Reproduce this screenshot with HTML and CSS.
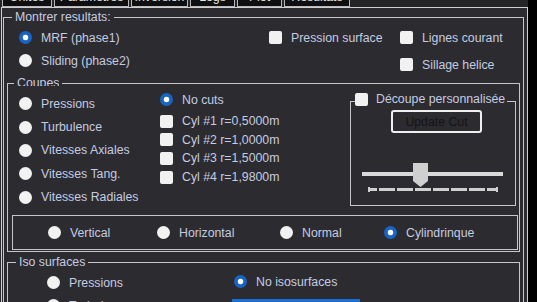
FILE: index.html
```html
<!DOCTYPE html>
<html lang="fr">
<head>
    <meta charset="UTF-8">
    <title>Résultats</title>
    <link rel="stylesheet" href="styles.css">
</head>
<body>
<div class="window">
    <div class="tabs">
        <div class="tab t1">Unités</div>
        <div class="tab t2">Paramètres</div>
        <div class="tab t3">Inversion</div>
        <div class="tab t4">Logs</div>
        <div class="tab t5">Plot</div>
        <div class="tab t6">Résultats</div>
    </div>

    <div class="page">
        <fieldset class="group show">
            <legend>Montrer resultats:</legend>
            <div class="top">
                <div class="col">
                    <label class="opt"><span class="radio on"></span>MRF (phase1)</label>
                    <label class="opt"><span class="radio"></span>Sliding (phase2)</label>
                </div>
                <div class="col">
                    <label class="opt"><span class="check"></span>Pression surface</label>
                </div>
                <div class="col checks-b">
                    <label class="opt"><span class="check"></span>Lignes courant</label>
                    <label class="opt"><span class="check"></span>Sillage helice</label>
                </div>
            </div>

            <!-- coupes -->
            <fieldset class="group coupes">
                <legend><span class="clip">Coupes</span></legend>
                <div class="coupes-row">
                    <div class="col vars">
                        <label class="opt"><span class="radio"></span>Pressions</label>
                        <label class="opt"><span class="radio"></span>Turbulence</label>
                        <label class="opt"><span class="radio"></span>Vitesses Axiales</label>
                        <label class="opt"><span class="radio"></span>Vitesses Tang.</label>
                        <label class="opt"><span class="radio"></span>Vitesses Radiales</label>
                    </div>
                    <div class="col cuts">
                        <label class="opt nocut"><span class="radio on"></span>No cuts</label>
                        <label class="opt cyl"><span class="check"></span>Cyl #1 r=0,5000m</label>
                        <label class="opt cyl"><span class="check"></span>Cyl #2 r=1,0000m</label>
                        <label class="opt cyl"><span class="check"></span>Cyl #3 r=1,5000m</label>
                        <label class="opt cyl"><span class="check"></span>Cyl #4 r=1,9800m</label>
                    </div>
                    <fieldset class="group custom">
                        <legend><span class="check"></span>Découpe personnalisée</legend>
                        <button class="update">Update Cut</button>
                        <svg class="slider" width="164" height="67" viewBox="0 0 164 67">
                            <rect x="11" y="39" width="141" height="4" fill="#dadada"/>
                            <polygon points="62,30 77,30 77,48 69.5,54 62,48" fill="#cfcfcf"/>
                            <rect x="17" y="54" width="2" height="5" fill="#cfcfcf"/>
                            <rect x="145" y="54" width="2" height="5" fill="#cfcfcf"/>
                            <rect x="17" y="55" width="9" height="3" fill="#cfcfcf"/>
                            <rect x="28" y="55" width="16" height="3" fill="#cfcfcf"/>
                            <rect x="46" y="55" width="16" height="3" fill="#cfcfcf"/>
                            <rect x="64" y="55" width="16" height="3" fill="#cfcfcf"/>
                            <rect x="82" y="55" width="16" height="3" fill="#cfcfcf"/>
                            <rect x="100" y="55" width="16" height="3" fill="#cfcfcf"/>
                            <rect x="118" y="55" width="16" height="3" fill="#cfcfcf"/>
                            <rect x="136" y="55" width="11" height="3" fill="#cfcfcf"/>
                        </svg>
                    </fieldset>
                </div>
                <fieldset class="group orient">
                    <label class="opt"><span class="radio"></span>Vertical</label>
                    <label class="opt"><span class="radio"></span>Horizontal</label>
                    <label class="opt"><span class="radio"></span>Normal</label>
                    <label class="opt"><span class="radio on"></span>Cylindrinque</label>
                </fieldset>
            </fieldset>

            <!-- iso surfaces -->
            <fieldset class="group iso">
                <legend>Iso surfaces</legend>
                <div class="iso-row">
                    <div class="col iso-vars">
                        <label class="opt"><span class="radio"></span>Pressions</label>
                        <label class="opt"><span class="radio"></span>Turbulence</label>
                    </div>
                    <div class="col iso-side">
                        <label class="opt"><span class="radio on"></span>No isosurfaces</label>
                        <div class="iso-btn"></div>
                    </div>
                </div>
            </fieldset>
        </fieldset>
    </div>
</div>
</body>
</html>
```

FILE: styles.css
```css
* {
    box-sizing: border-box;
}
body {
    margin: 0;
    width: 537px;
    height: 302px;
    overflow: hidden;
    background: #000;
    font-family: "Liberation Sans", Arial, sans-serif;
    font-size: 12.3px;
    color: #c4cce1;
}
.window {
    width: 528px;
    height: 302px;
    background: #2c2b30;
}
.tabs {
    height: 7px;
    display: flex;
    align-items: flex-end;
    overflow: hidden;
    padding-left: 2px;
    gap: 2px;
    background: #252528;
}
.tab {
    flex: none;
    height: 20px;
    line-height: 18px;
    border: 1px solid #b8b8b8;
    background: #0f0f11;
    color: #e6e6e6;
    text-align: center;
}
.t1 { width: 50px; }
.t2 { width: 75px; }
.t3 { width: 57px; }
.t4 { width: 45px; }
.t5 { width: 45px; }
.t6 { width: 66px; }

.page {
    margin-left: 1px;
    height: 295px;
    border: 1px solid #cfcfcf;
    border-bottom: none;
    padding: 2px 3px 0 1px;
}

fieldset {
    margin: 0;
    padding: 0;
    min-width: 0;
    border: 1px solid #c6c6c6;
}
legend {
    padding: 0 3px;
    height: 14px;
    line-height: 14px;
}

.opt {
    display: flex;
    align-items: center;
    gap: 9px;
    height: 23px;
    white-space: nowrap;
}
.radio {
    flex: none;
    width: 13px;
    height: 13px;
    border-radius: 50%;
    background: #f2f2f2;
}
.radio.on {
    background: radial-gradient(circle, #fff 0 2.4px, #1764c4 3.2px);
}
.check {
    flex: none;
    width: 13px;
    height: 13px;
    border-radius: 2px;
    background: #f1f1f1;
}

/* montrer resultats */
.show legend {
    margin-left: 8px;
}
.top {
    display: grid;
    grid-template-columns: 250px 131px auto;
    height: 52px;
    padding: 2px 0 0 15px;
}
.checks-b .opt + .opt {
    margin-top: 4px;
}

/* coupes */
.coupes {
    margin: 0 3px;
}
.coupes legend {
    margin-left: 6px;
}
.clip {
    display: block;
    height: 10px;
    overflow: hidden;
}
.coupes-row {
    display: flex;
    height: 125px;
}
.vars {
    width: 152px;
    padding: 2px 0 0 11px;
}
.vars .opt {
    height: 23.4px;
}
.cuts {
    width: 190px;
}
.cuts .nocut {
    height: 19px;
}
.cuts .cyl {
    height: 18.6px;
}
.cuts .nocut + .cyl {
    margin-top: 3px;
}
.custom {
    width: 166px;
    height: 114px;
    margin-top: 2px;
}
.custom legend {
    display: flex;
    align-items: center;
    gap: 8px;
    height: 18px;
    margin-left: 4px;
    padding: 0 2px 4px 0;
}
.update {
    display: block;
    width: 91px;
    height: 23px;
    margin-left: 40px;
    padding: 0;
    border: 2px solid #efefef;
    border-radius: 3px;
    background: #2c2b30;
    color: #141416;
    font: inherit;
}
.slider {
    display: block;
}
.orient {
    display: grid;
    grid-template-columns: 109px 123px 104px auto;
    align-items: center;
    height: 35px;
    margin: 0 1px 1px 4px;
    padding-left: 35px;
}

/* iso surfaces */
.iso {
    margin: 3px 3px 0;
}
.iso legend {
    margin-left: 8px;
}
.iso-row {
    display: grid;
    grid-template-columns: 187px auto;
    padding-left: 39px;
}
.iso-vars {
    padding-top: 2px;
}
.iso-side {
    padding-top: 1px;
}
.iso-btn {
    width: 128px;
    height: 24px;
    margin: 6px 0 0 -2px;
    background: #1d6fd1;
}
```
